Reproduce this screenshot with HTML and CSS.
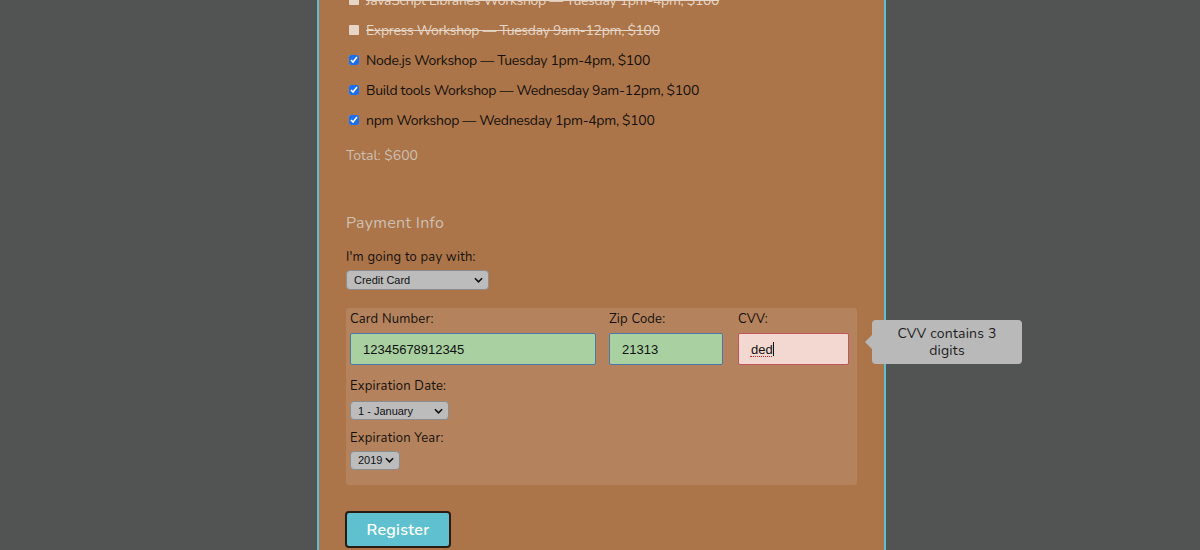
FILE: index.html
```html
<!DOCTYPE html>
<html lang="en">
<head>
<meta charset="utf-8">
<title>Register</title>
<link rel="stylesheet" href="styles.css">
</head>
<body>
<main class="page">
  <form class="form">
    <fieldset class="activities">
      <label class="act disabled"><input type="checkbox" disabled> <span>JavaScript Libraries Workshop — Tuesday 1pm-4pm, $100</span></label>
      <label class="act disabled"><input type="checkbox" disabled> <span>Express Workshop — Tuesday 9am-12pm, $100</span></label>
      <label class="act"><input type="checkbox" checked> <span>Node.js Workshop — Tuesday 1pm-4pm, $100</span></label>
      <label class="act"><input type="checkbox" checked> <span>Build tools Workshop — Wednesday 9am-12pm, $100</span></label>
      <label class="act"><input type="checkbox" checked> <span>npm Workshop — Wednesday 1pm-4pm, $100</span></label>
      <p class="total">Total: $600</p>
    </fieldset>

    <fieldset class="payment">
      <h2 class="legend">Payment Info</h2>
      <label class="lbl" for="payment">I'm going to pay with:</label>
      <div class="sel sel-pay">
        <select id="payment"><option>Credit Card</option></select>
        <svg class="chev" viewBox="0 0 10 6" width="9" height="6"><path d="M1 1l4 4 4-4" fill="none" stroke="#111" stroke-width="1.8"/></svg>
      </div>

      <div class="cc">
        <div class="cc-row">
          <div class="field">
            <label class="lbl">Card Number:</label>
            <input class="txt valid" type="text" value="12345678912345">
          </div>
          <div class="field">
            <label class="lbl">Zip Code:</label>
            <input class="txt valid" type="text" value="21313">
          </div>
          <div class="field cvv">
            <label class="lbl">CVV:</label>
            <input class="txt invalid" type="text" value="ded" spellcheck="false">
            <span class="squiggle"></span>
            <span class="caret"></span>
            <div class="tip">CVV contains 3 digits</div>
          </div>
        </div>
        <label class="lbl exp">Expiration Date:</label>
        <div class="sel sel-month">
          <select><option>1 - January</option></select>
          <svg class="chev" viewBox="0 0 10 6" width="9" height="6"><path d="M1 1l4 4 4-4" fill="none" stroke="#111" stroke-width="1.8"/></svg>
        </div>
        <label class="lbl exp-year">Expiration Year:</label>
        <div class="sel sel-year">
          <select><option>2019</option></select>
          <svg class="chev" viewBox="0 0 10 6" width="9" height="6"><path d="M1 1l4 4 4-4" fill="none" stroke="#111" stroke-width="1.8"/></svg>
        </div>
      </div>
    </fieldset>

    <button class="btn" type="button">Register</button>
  </form>
</main>
</body>
</html>
```

FILE: styles.css
```css
* { box-sizing: border-box; }
html, body { margin: 0; padding: 0; }
body {
  background: #525453;
  font-family: "Nunito", "Lato", "Open Sans", sans-serif;
  color: #15100d;
  height: 550px;
  overflow: hidden;
}
.page {
  width: 569px;
  margin-left: calc(50% - 283px);
  background: #ab7549;
  border-left: 2px solid #5bc0d3;
  border-right: 2px solid #5bc0d3;
  padding: 0 27px 40px 27px;
  min-height: 600px;
}
.form { margin-top: -15px; }
fieldset { border: 0; margin: 0; padding: 0; }

.act {
  display: flex;
  align-items: center;
  height: 30px;
  font-size: 14px;
  letter-spacing: -0.3px;
}
.act input {
  margin: 0 7px 0 3px;
  width: 10px;
  height: 10px;
  accent-color: #1a6ff0;
}
.act.disabled { color: #e6d6c8; }
.act.disabled span { text-decoration: line-through; }
.act.disabled input {
  appearance: none;
  background: #e7d6c8;
  border-radius: 1px;
}
.total {
  margin: 11px 0 0 0;
  font-size: 14px;
  line-height: 20px;
  color: #cdbfb2;
}

.payment { margin-top: 45px; }
.legend {
  margin: 0;
  font-size: 16px;
  font-weight: 400;
  line-height: 24px;
  color: #cdbfb2;
  letter-spacing: 0.3px;
}
.lbl {
  display: block;
  font-size: 13px;
  line-height: 18px;
  letter-spacing: 0.2px;
}
.payment > .lbl { margin-top: 13px; }

.sel { position: relative; display: inline-block; }
.sel select {
  appearance: none;
  display: block;
  background: #bcbcbc;
  border: 1px solid #8c8c8c;
  border-radius: 4px;
  font-family: "Liberation Sans", Arial, sans-serif;
  font-size: 11px;
  color: #111;
  padding: 0 0 0 7px;
  margin: 0;
}
.sel .chev { position: absolute; right: 6px; top: 50%; margin-top: -3px; pointer-events: none; }
.sel-pay { margin-top: 4px; }
.sel-pay select { width: 143px; height: 20px; }
.sel-month select { width: 99px; height: 19px; }
.sel-year select { width: 50px; height: 19px; }

.cc {
  margin-top: 18px;
  background: #b4835d;
  border-radius: 3px;
  padding: 2px 6px 15px 4px;
}
.cc-row {
  display: grid;
  grid-template-columns: 246px 114px 113px;
  column-gap: 13px;
}
.cc-row .field:nth-child(3) { margin-left: 2px; }
.field { position: relative; }
.field .lbl { margin-bottom: 5px; }
.txt {
  display: block;
  width: 100%;
  height: 32px;
  font-family: "Liberation Sans", Arial, sans-serif;
  font-size: 13px;
  color: #111;
  padding: 0 12px;
  border-radius: 2px;
  margin: 0;
  outline: none;
}
.txt.valid { background: #a8d0a0; border: 1px solid #4b78a8; }
.txt.invalid {
  background: #f3d8d2;
  border: 1px solid #c0545c;
}
.squiggle {
  position: absolute;
  left: 12px;
  top: 46px;
  width: 22px;
  border-top: 1px dotted #e02020;
}
.caret {
  position: absolute;
  left: 35px;
  top: 32px;
  width: 1px;
  height: 14px;
  background: #111;
}

.exp { margin-top: 12px; }
.sel-month { margin-top: 6px; }
.exp-year { margin-top: 8px; }
.sel-year { margin-top: 4px; }

.tip {
  position: absolute;
  left: 134px;
  top: 10px;
  width: 150px;
  height: 44px;
  background: #b9b9b9;
  border-radius: 4px;
  font-size: 14px;
  line-height: 17px;
  color: #1e1e1e;
  text-align: center;
  padding: 5px 14px;
  letter-spacing: 0.2px;
}
.tip::before {
  content: "";
  position: absolute;
  left: -7px;
  top: 15px;
  border-top: 7px solid transparent;
  border-bottom: 7px solid transparent;
  border-right: 7px solid #b9b9b9;
}

.btn {
  display: block;
  margin-top: 26px;
  width: 106px;
  height: 37px;
  background: #5fc1d0;
  border: 2px solid #2a1c14;
  border-radius: 4px;
  color: #fff;
  font-family: "Nunito", "Lato", "Open Sans", sans-serif;
  font-size: 16px;
  font-weight: 600;
  letter-spacing: 0.3px;
  margin-left: -1px;
}
```
